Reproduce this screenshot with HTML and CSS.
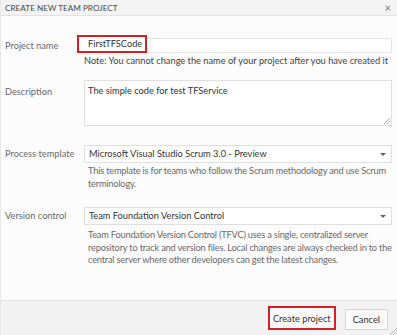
FILE: index.html
```html
<!DOCTYPE html>
<html>
<head>
<meta charset="utf-8">
<link rel="stylesheet" href="styles.css">
</head>
<body>
<div class="dialog">
  <div class="titlebar">
    <span class="title">CREATE NEW TEAM PROJECT</span>
    <span class="close">×</span>
  </div>
  <div class="content">
    <div class="row row-name">
      <div class="label">Project name</div>
      <div class="field">
        <div class="input name-input"><span class="hl">FirstTFSCode</span></div>
        <div class="note">Note: You cannot change the name of your project after you have created it</div>
      </div>
    </div>
    <div class="row row-desc">
      <div class="label">Description</div>
      <div class="field">
        <div class="textarea">The simple code for test TFService
          <svg class="grip" width="6" height="6" viewBox="0 0 6 6"><path d="M0 6L6 0M3 6L6 3" stroke="#999" stroke-width="0.8"/></svg>
        </div>
      </div>
    </div>
    <div class="row row-proc">
      <div class="label">Process template</div>
      <div class="field">
        <div class="select">Microsoft Visual Studio Scrum 3.0 - Preview<span class="arrow"></span></div>
        <div class="help">This template is for teams who follow the Scrum methodology and use Scrum terminology.</div>
      </div>
    </div>
    <div class="row row-vc">
      <div class="label">Version control</div>
      <div class="field">
        <div class="select">Team Foundation Version Control<span class="arrow"></span></div>
        <div class="help help-vc">Team Foundation Version Control (TFVC) uses a single, centralized server repository to track and version files. Local changes are always checked in to the central server where other developers can get the latest changes.</div>
      </div>
    </div>
  </div>
  <div class="footer">
    <button class="btn btn-create">Create project</button>
    <button class="btn">Cancel</button>
    <svg class="resize" width="8" height="8" viewBox="0 0 8 8"><path d="M1 8L8 1M4 8L8 4" stroke="#aaa" stroke-width="0.8"/></svg>
  </div>
</div>
</body>
</html>
```
FILE: styles.css
```css
html, body { margin: 0; padding: 0; }
body {
  width: 397px; height: 335px; overflow: hidden;
  font-family: Lato, "Open Sans", sans-serif;
  font-size: 9.25px;
  background: #fff;
}
.dialog {
  width: 397px; height: 335px; box-sizing: border-box;
  display: flex; flex-direction: column;
  background: #fcfcfc;
  border-left: 1px solid #e8e8e8;
}
.titlebar {
  height: 16px; box-sizing: border-box;
  background: #f3f3f3;
  border-bottom: 1px solid #e2e2e2;
  display: flex; align-items: center; justify-content: space-between;
  padding: 0 6px 0 4px;
}
.title { font-size: 8.2px; color: #4a4a4a; }
.close { font-size: 11px; color: #777; }
.content { flex: 1; padding-left: 4px; padding-right: 5px; }
.row { display: flex; }
.label { width: 79px; color: #6a6a6a; flex: none; white-space: nowrap; }
.field { flex: 1; min-width: 0; }
.row-name { margin-top: 22px; }
.row-name .label { padding-top: 2px; }
.input {
  height: 15px; box-sizing: border-box; border: 1px solid #e4e4e4; background: #fff;
  position: relative;
}
.hl {
  position: absolute; left: -8px; top: -4px;
  display: inline-block; border: 2px solid #d81f26; height: 18px; box-sizing: border-box;
  padding: 0 3px 0 9px; line-height: 14px; color: #333; background: #fff; white-space: nowrap;
}
.note { color: #444; margin-top: 2px; white-space: nowrap; }
.row-desc { margin-top: 14px; }
.row-desc .label { padding-top: 6px; }
.textarea {
  height: 46px; box-sizing: border-box; border: 1px solid #e0e0e0; background: #fff;
  padding: 4px 3px; color: #333; position: relative;
}
.grip { position: absolute; right: 1px; bottom: 1px; }
.row-proc { margin-top: 19px; }
.row-proc .label, .row-vc .label { padding-top: 3px; }
.select {
  height: 18px; box-sizing: border-box; border: 1px solid #e0e0e0; background: #fff;
  padding: 0 4px; line-height: 16px; color: #333; position: relative; white-space: nowrap;
}
.arrow {
  position: absolute; right: 5px; top: 7px;
  border-left: 3px solid transparent; border-right: 3px solid transparent; border-top: 3px solid #666;
}
.help { color: #6a6a6a; padding: 2px 0 0 4px; line-height: 12.6px; letter-spacing: -0.2px; }
.help-vc { padding-top: 4px; }
.row-vc { margin-top: 17px; }
.footer {
  height: 35px; box-sizing: border-box; flex: none;
  background: #f2f2f2; border-top: 1px solid #e0e0e0;
  display: flex; align-items: flex-start; justify-content: flex-end;
  padding: 5px 9px 0 0; gap: 9px; position: relative;
}
.btn {
  font-family: inherit; font-size: 9.25px; color: #333;
  background: #fafafa; border: 1px solid #d4d4d4; height: 21px; padding: 0 7px;
  margin-top: 3px;
}
.btn-create { border: 2px solid #d81f26; height: 24px; margin-top: 0; padding: 0 3px; }
.resize { position: absolute; right: 0; bottom: 0; }
```
